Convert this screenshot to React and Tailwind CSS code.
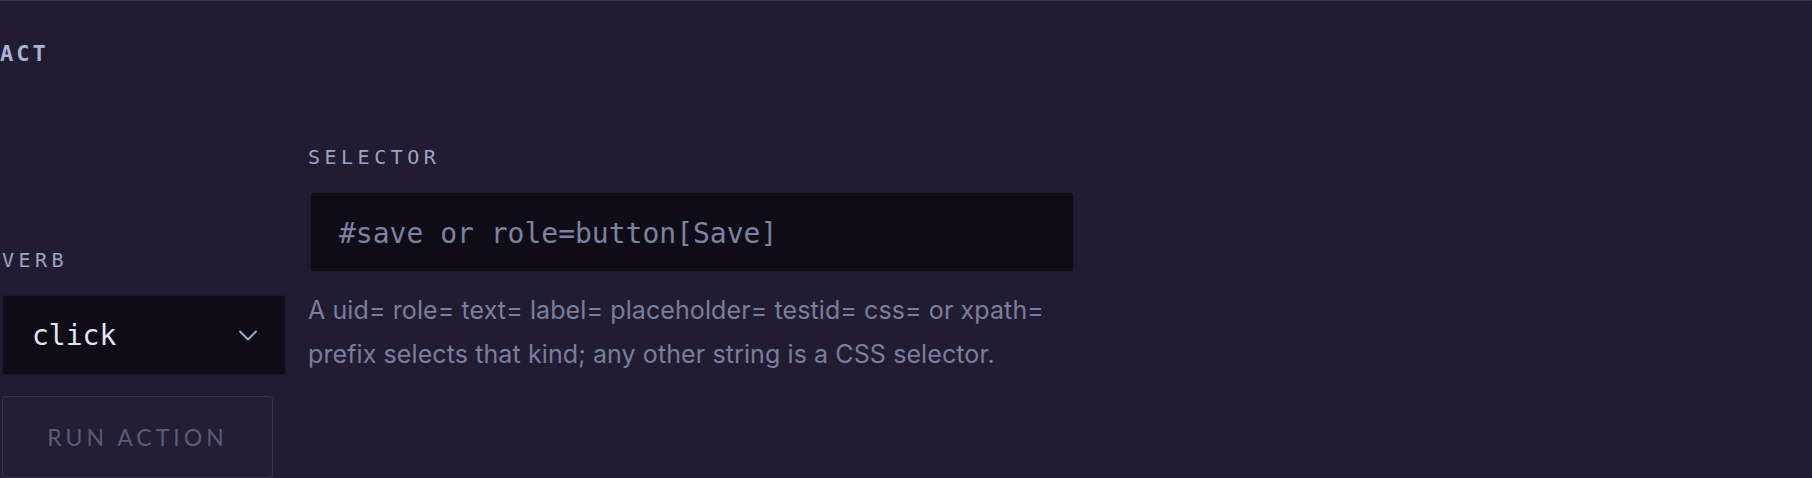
import React from 'react';

function Label({ children }) {
    return (
        <div className="block text-[20px] leading-none tracking-[4.5px] text-[#9ca3c3] font-['DejaVu_Sans_Mono',monospace] mt-[1px] mb-[25px]">
            {children}
        </div>
    );
}

function Chevron() {
    return (
        <svg width="18" height="11" viewBox="0 0 18 11" fill="none" className="shrink-0">
            <path d="M1 1.5L9 9.5L17 1.5" stroke="#a6aecd" strokeWidth="1.8" strokeLinecap="round" strokeLinejoin="round" />
        </svg>
    );
}

export default function App() {
    return (
        <div className="w-full h-[478px] overflow-hidden bg-[#221c33] border-t border-[#3a3350]">
            <div className="mt-[42px] text-[22px] leading-none font-bold tracking-[3px] text-[#aab3d5] font-['DejaVu_Sans_Mono',monospace]">
                ACT
            </div>

            <div className="flex items-start gap-[22px] mt-[40px]">
                <div className="w-[284px] ml-[2px] mt-[144px] flex flex-col">
                    <Label>VERB</Label>
                    <div className="h-[80px] w-[284px] flex items-center justify-between pl-[29px] pr-[28px] bg-[#0f0c18] border border-[#1b1727] rounded-[3px]">
                        <span className="text-[28px] leading-none text-[#e3e5f0] font-['DejaVu_Sans_Mono',monospace] pt-[2px]">click</span>
                        <Chevron />
                    </div>
                    <button
                        type="button"
                        disabled
                        className="mt-[21px] w-[271px] h-[82px] flex items-center justify-center bg-[#231d35] border border-[#37314c] rounded-[4px] text-[23px] tracking-[4px] text-[#5e5977] font-['Lato',sans-serif]"
                    >
                        RUN ACTION
                    </button>
                </div>

                <div className="w-[766px] mt-[41px] flex flex-col">
                    <Label>SELECTOR</Label>
                    <div className="ml-[2px] h-[80px] w-[764px] flex items-center pl-[28px] bg-[#0f0c18] border border-[#1b1727] rounded-[3px]">
                        <span className="text-[28px] leading-none text-[#7d82a0] font-['DejaVu_Sans_Mono',monospace] pt-[4px]">
                            #save or role=button[Save]
                        </span>
                    </div>
                    <p className="mt-[17px] text-[25px] leading-[43.5px] tracking-[0.1px] text-[#7a7e9d] font-['Inter',sans-serif]">
                        A uid= role= text= label= placeholder= testid= css= or xpath= prefix selects that kind; any other string is a CSS selector.
                    </p>
                </div>
            </div>
        </div>
    );
}
